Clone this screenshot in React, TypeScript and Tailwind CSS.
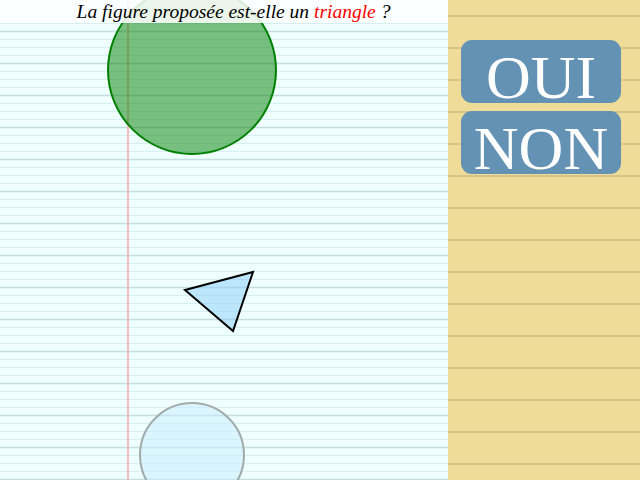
const PAPER_LINES = Array.from({ length: 60 }, (_, i) => 23 + i * 8);

function Paper() {
  return (
    <svg width="448" height="480" className="absolute inset-0 block">
      <rect x="0" y="0" width="448" height="480" fill="#eefffe" />
      {PAPER_LINES.map((y) => {
        const dark = (y - 31) % 32 === 0;
        return (
          <line
            key={y}
            x1="0"
            x2="448"
            y1={y + 0.5}
            y2={y + 0.5}
            stroke={dark ? "#c6dede" : "#d4f0f3"}
            strokeWidth={dark ? 1.6 : 1}
          />
        );
      })}
      <line x1="128" x2="128" y1="0" y2="480" stroke="#f2aeae" strokeWidth="1.6" />
      <circle cx="192" cy="70" r="84" fill="rgba(0,128,0,0.5)" stroke="#008000" strokeWidth="2" />
      <polygon points="185,290 253,272 233,331" fill="rgba(135,206,250,0.5)" stroke="#000" strokeWidth="2" strokeLinejoin="miter" />
      <circle cx="192" cy="455" r="52" fill="rgba(200,235,255,0.5)" stroke="#a3aaaa" strokeWidth="2" />
    </svg>
  );
}

function AnswerButton({ label }: { label: string }) {
  return (
    <button
      type="button"
      className="block h-[63px] w-[160px] rounded-[11px] bg-[#6492b5] pt-[11px] text-center text-[62px] leading-[52px] text-white"
      style={{ fontFamily: '"Liberation Serif", "Times New Roman", serif' }}
    >
      {label}
    </button>
  );
}

export default function App() {
  return (
    <div className="flex h-[480px] w-[640px] overflow-hidden">
      <div className="relative h-[480px] w-[448px] shrink-0 overflow-hidden">
        <Paper />
        <div
          className="absolute inset-x-0 top-0 flex h-[23px] items-center justify-center bg-white/85 pl-[19px] text-[19.5px] italic leading-none text-black"
          style={{ fontFamily: '"Liberation Serif", "Times New Roman", serif' }}
        >
          <span>
            La figure proposée est-elle un <span className="text-[#ff0000]">triangle</span> ?
          </span>
        </div>
      </div>
      <div className="flex flex-1 flex-col items-start gap-[8px] bg-[#eedc98] bg-[repeating-linear-gradient(to_bottom,transparent_0px,transparent_15px,#d6c48a_15px,#d6c48a_17px,transparent_17px,transparent_32px)] pl-[13px] pt-[40px]">
        <AnswerButton label="OUI" />
        <AnswerButton label="NON" />
      </div>
    </div>
  );
}
